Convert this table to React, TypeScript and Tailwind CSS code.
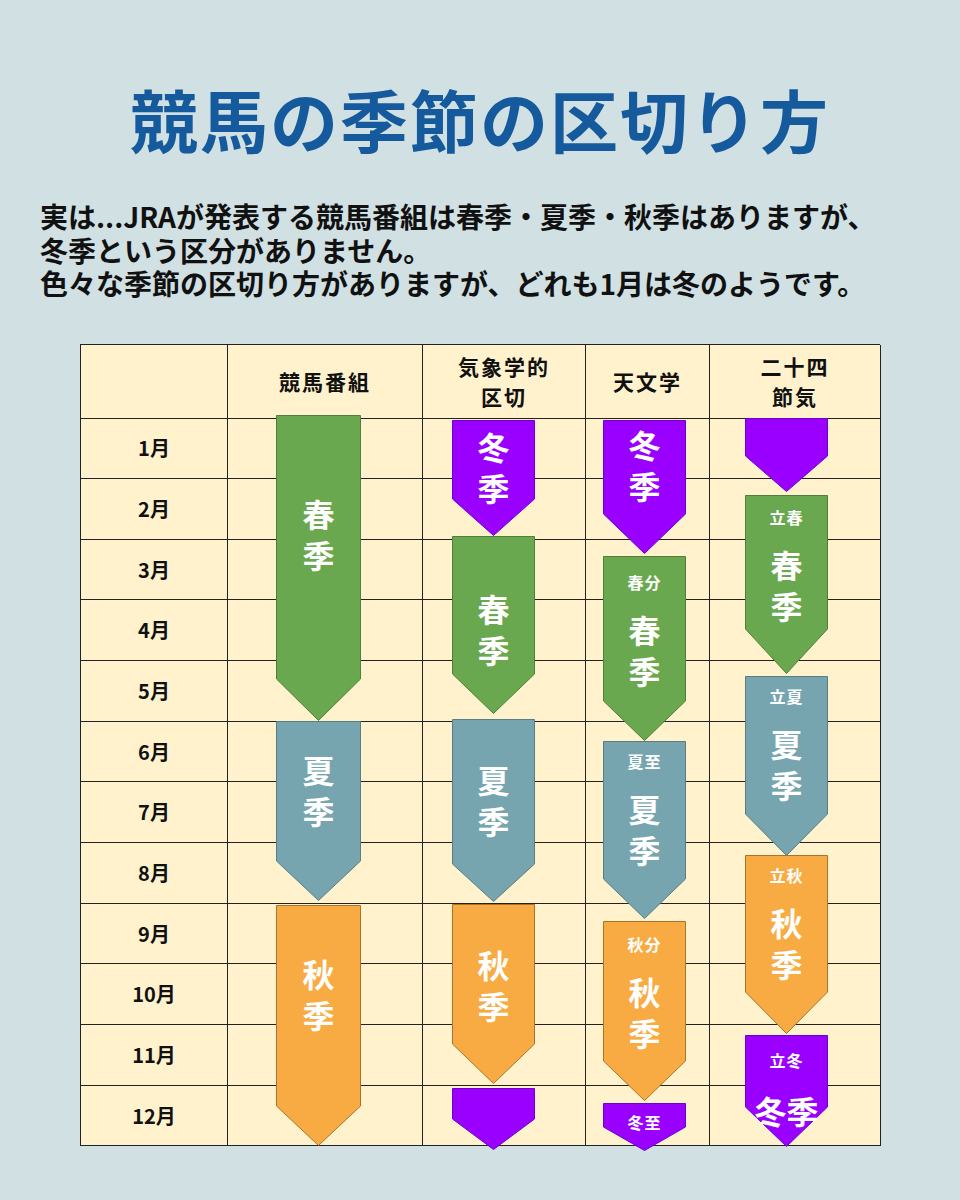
import React from "react";

const FONT = { fontFamily: '"Noto Sans CJK JP", "Noto Sans", sans-serif' };

// table origin on page: x 80, y 345
const TABLE_TOP = 345;

const colLeft: Record<number, number> = { 2: 196, 3: 372, 4: 523, 5: 665 };
const colWidth: Record<number, number> = { 2: 85, 3: 83, 4: 83, 5: 83 };

const palette = {
  green: { fill: "#6aa84f", stroke: "#4f7f3a" },
  blue: { fill: "#76a5af", stroke: "#587d85" },
  orange: { fill: "#f9ab43", stroke: "#a9732c" },
  purple: { fill: "#9900ff", stroke: "#7300c0" },
};

type Arrow = {
  col: number;
  top: number;
  tip: number;
  d: number;
  color: keyof typeof palette;
  label?: string;
  big?: string[];
  pt: number;
  gap?: number;
};

const arrows: Arrow[] = [
  // 競馬番組
  { col: 2, top: 416, tip: 722, d: 42, color: "green", big: ["春", "季"], pt: 78 },
  { col: 2, top: 722, tip: 902, d: 40, color: "blue", big: ["夏", "季"], pt: 28 },
  { col: 2, top: 906, tip: 1147, d: 40, color: "orange", big: ["秋", "季"], pt: 48 },
  // 気象学的区切
  { col: 3, top: 421, tip: 537, d: 37, color: "purple", big: ["冬", "季"], pt: 6 },
  { col: 3, top: 537, tip: 715, d: 40, color: "green", big: ["春", "季"], pt: 52 },
  { col: 3, top: 720, tip: 903, d: 38, color: "blue", big: ["夏", "季"], pt: 40 },
  { col: 3, top: 905, tip: 1085, d: 40, color: "orange", big: ["秋", "季"], pt: 40 },
  { col: 3, top: 1089, tip: 1151, d: 31, color: "purple", pt: 0 },
  // 天文学
  { col: 4, top: 421, tip: 555, d: 40, color: "purple", big: ["冬", "季"], pt: 4 },
  { col: 4, top: 557, tip: 742, d: 40, color: "green", label: "春分", big: ["春", "季"], pt: 16 },
  { col: 4, top: 742, tip: 920, d: 40, color: "blue", label: "夏至", big: ["夏", "季"], pt: 10 },
  { col: 4, top: 922, tip: 1102, d: 40, color: "orange", label: "秋分", big: ["秋", "季"], pt: 13 },
  { col: 4, top: 1104, tip: 1152, d: 24, color: "purple", label: "冬至", pt: 9 },
  // 二十四節気
  { col: 5, top: 419, tip: 493, d: 36, color: "purple", pt: 0 },
  { col: 5, top: 496, tip: 675, d: 45, color: "green", label: "立春", big: ["春", "季"], pt: 12 },
  { col: 5, top: 677, tip: 857, d: 42, color: "blue", label: "立夏", big: ["夏", "季"], pt: 10 },
  { col: 5, top: 856, tip: 1035, d: 42, color: "orange", label: "立秋", big: ["秋", "季"], pt: 10 },
  { col: 5, top: 1036, tip: 1148, d: 40, color: "purple", label: "立冬", big: ["冬季"], pt: 15, gap: 20 },
];

const months = ["1月", "2月", "3月", "4月", "5月", "6月", "7月", "8月", "9月", "10月", "11月", "12月"];

function ArrowShape({ a }: { a: Arrow }) {
  const w = colWidth[a.col];
  const h = a.tip - a.top;
  const c = palette[a.color];
  const pts = `0.5,0.5 ${w - 0.5},0.5 ${w - 0.5},${h - a.d} ${w / 2},${h - 0.5} 0.5,${h - a.d}`;
  return (
    <div
      className="absolute"
      style={{ left: colLeft[a.col], top: a.top - TABLE_TOP, width: w, height: h }}
    >
      <svg width={w} height={h} className="absolute inset-0">
        <polygon points={pts} fill={c.fill} stroke={c.stroke} strokeWidth={1} />
      </svg>
      <div className="relative flex flex-col items-center text-white font-bold" style={{ paddingTop: a.pt }}>
        {a.label && <div className="text-[16px] leading-[20px] tracking-[1px]">{a.label}</div>}
        {a.big &&
          a.big.map((t, i) => (
            <div
              key={i}
              className="text-[32px] leading-[41px]"
              style={i === 0 && a.label ? { marginTop: a.gap ?? 17 } : undefined}
            >
              {t}
            </div>
          ))}
      </div>
    </div>
  );
}

const headers = [
  [""],
  ["競馬番組"],
  ["気象学的", "区切"],
  ["天文学"],
  ["二十四", "節気"],
];

export default function App() {
  return (
    <div className="w-[960px] h-[1200px] bg-[#d0e0e3] overflow-hidden" style={FONT}>
      <h1 className="mt-[77px] text-center text-[68px] leading-[84px] font-bold tracking-[2px] text-[#155a9c]">
        競馬の季節の区切り方
      </h1>

      <div className="mt-[39px] pl-[40px] text-[28px] leading-[33.5px] font-bold text-[#111]">
        <p>実は...JRAが発表する競馬番組は春季・夏季・秋季はありますが、</p>
        <p>冬季という区分がありません。</p>
        <p>色々な季節の区切り方がありますが、どれも1月は冬のようです。</p>
      </div>

      <div className="relative ml-[80px] mt-[43px] w-[800px]">
        <div className="grid grid-cols-[147px_195px_163px_124px_171px] border-t border-l border-[#222] bg-[#fff2cc]">
          {headers.map((lines, i) => (
            <div
              key={i}
              className="h-[74px] border-r border-b border-[#222] flex flex-col items-center justify-center text-[21px] leading-[30px] font-bold tracking-[2px] text-[#111]"
            >
              {lines.map((l) => (
                <div key={l}>{l}</div>
              ))}
            </div>
          ))}
          {months.map((m) => (
            <React.Fragment key={m}>
              <div className="h-[60.67px] border-r border-b border-[#222] flex items-center justify-center text-[20px] font-bold text-[#111]">
                {m}
              </div>
              <div className="h-[60.67px] border-r border-b border-[#222]" />
              <div className="h-[60.67px] border-r border-b border-[#222]" />
              <div className="h-[60.67px] border-r border-b border-[#222]" />
              <div className="h-[60.67px] border-r border-b border-[#222]" />
            </React.Fragment>
          ))}
        </div>

        {arrows.map((a, i) => (
          <ArrowShape key={i} a={a} />
        ))}
      </div>
    </div>
  );
}
